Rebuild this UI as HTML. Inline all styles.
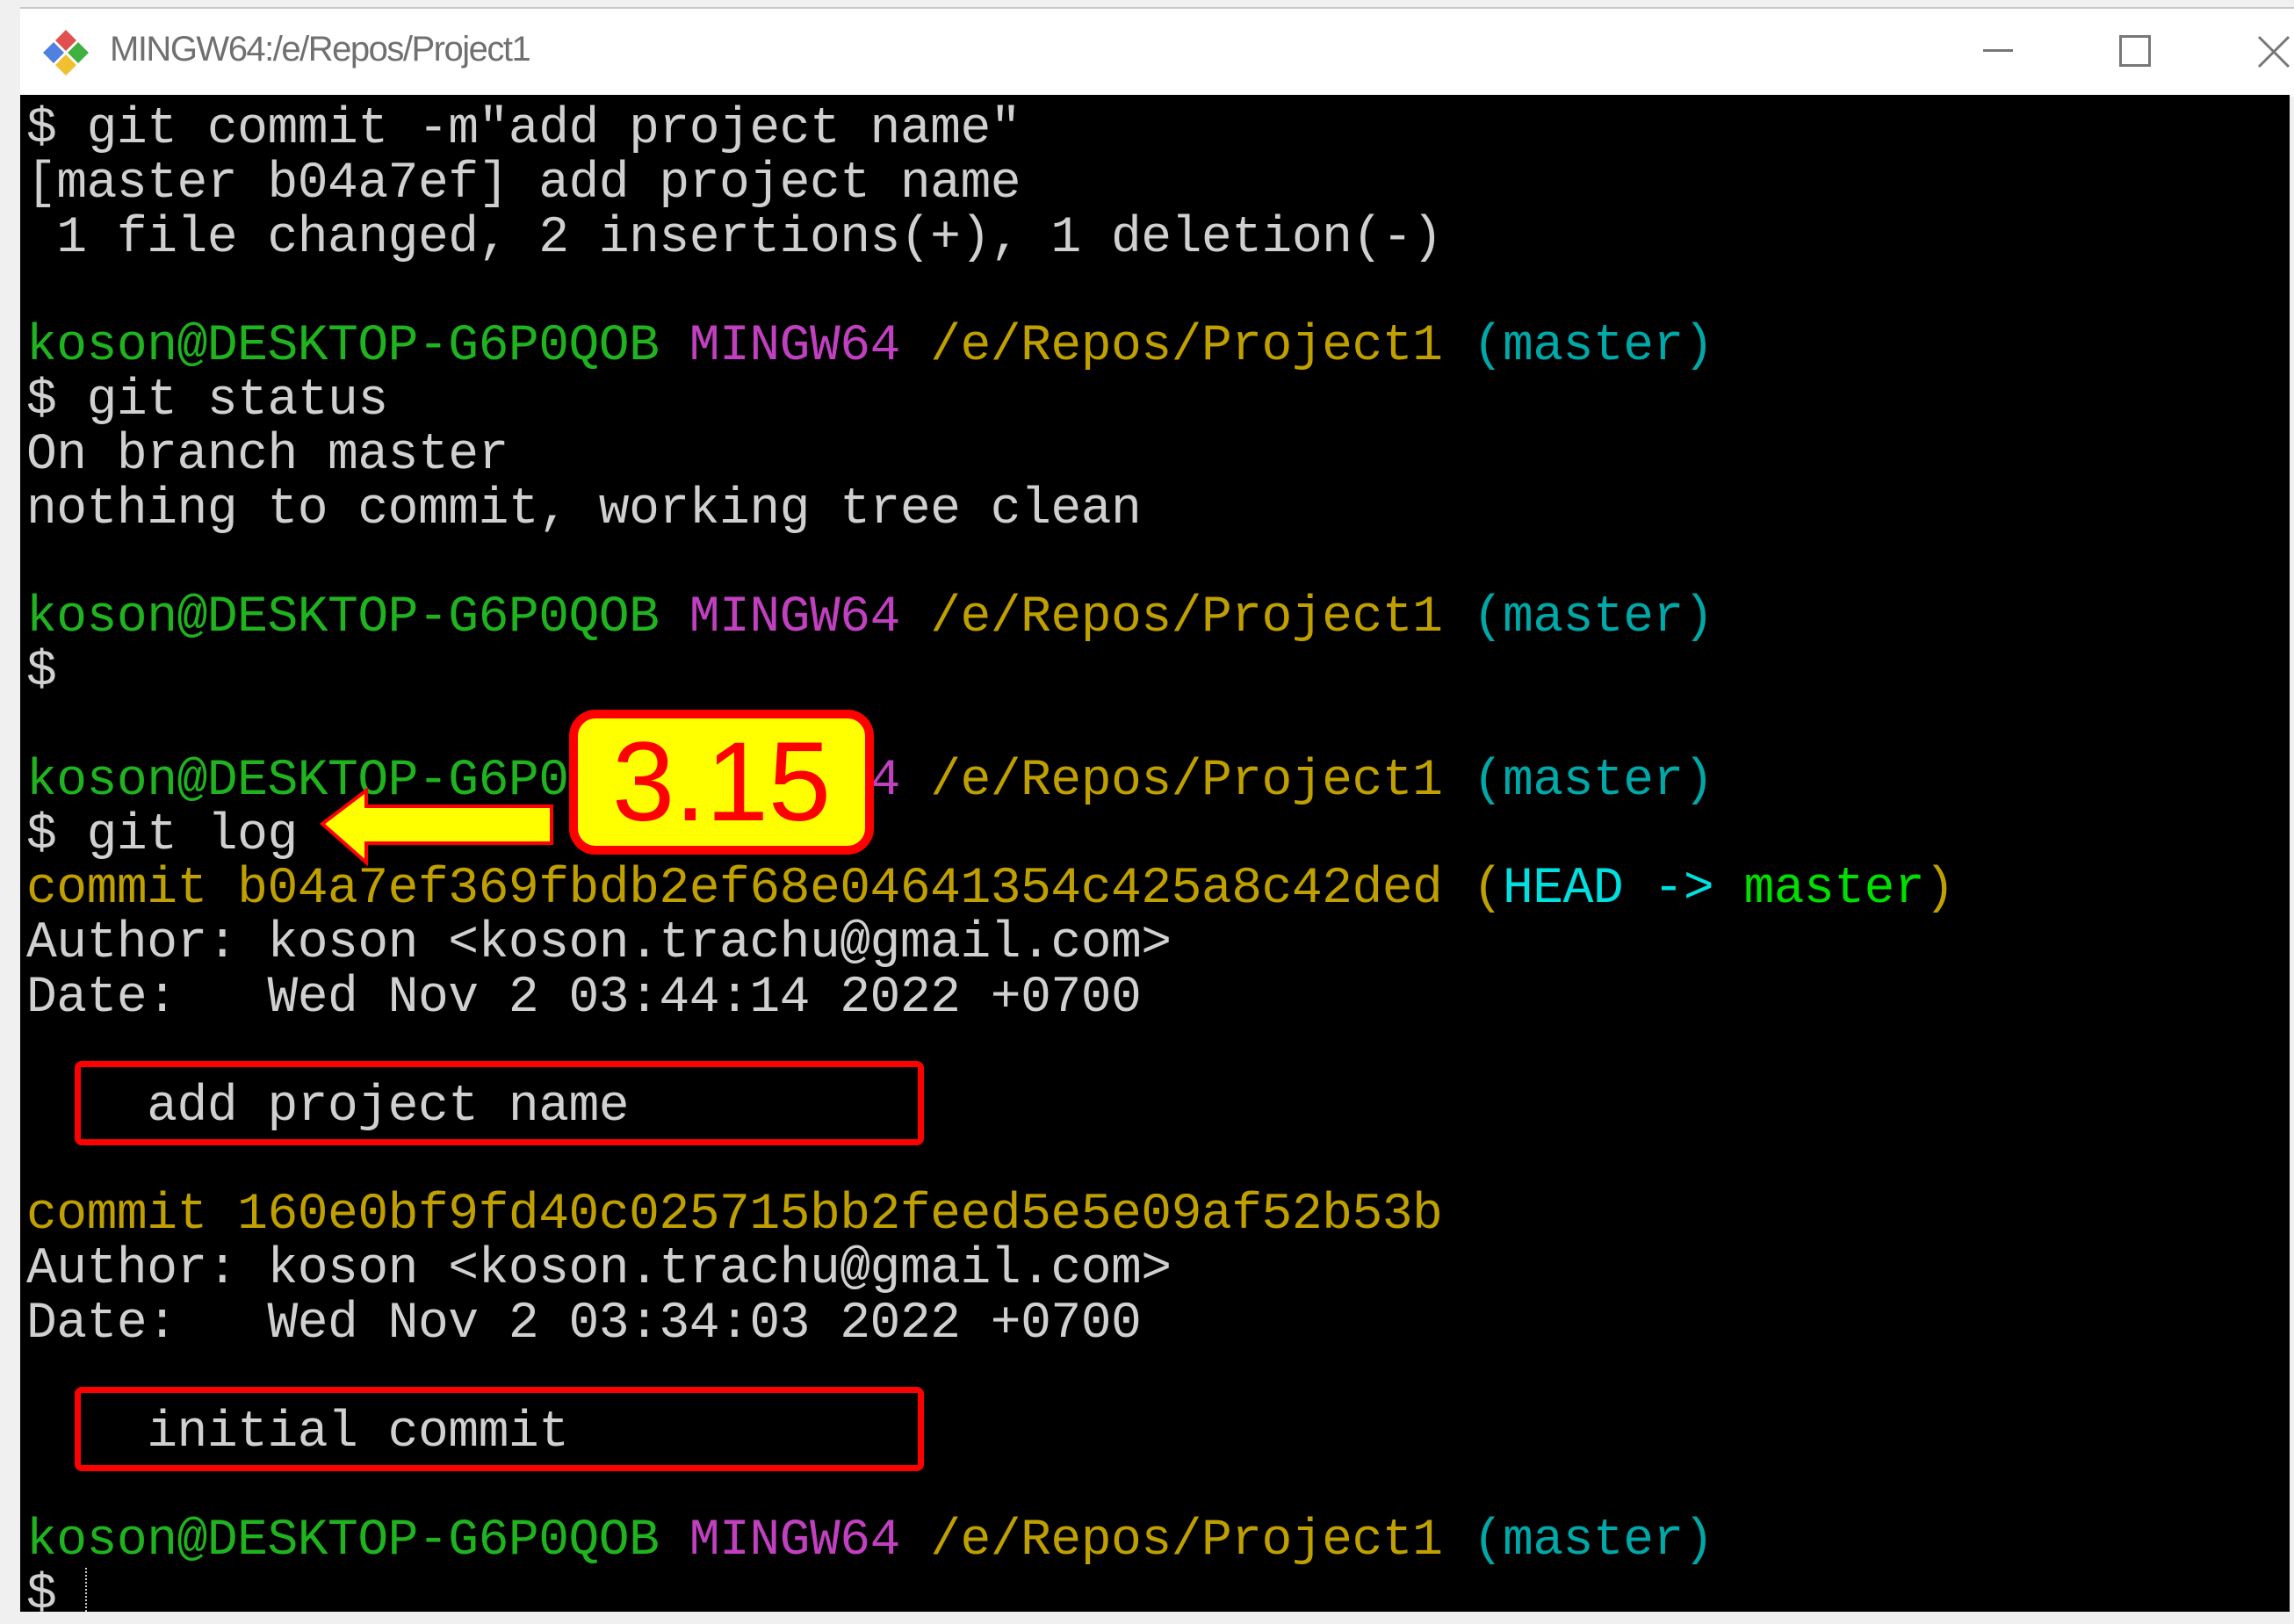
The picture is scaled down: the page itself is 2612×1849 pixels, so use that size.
<!DOCTYPE html>
<html><head><meta charset="utf-8"><style>
html,body{margin:0;padding:0;}
body{width:2612px;height:1835px;background:#f0f0f0;position:relative;overflow:hidden;}
#title{position:absolute;left:23px;top:8px;width:2589px;height:100px;background:#fff;border-top:2px solid #c8c8c8;}
#title .t{position:absolute;left:102px;top:24px;font:40px "Liberation Sans",sans-serif;color:#707070;letter-spacing:-1.5px;}
#term{position:absolute;left:23px;top:108px;width:2584px;height:1727px;background:#000;}
#lines{position:absolute;left:0;top:3px;width:2612px;height:1835px;}
.ln{position:absolute;left:30px;height:62px;line-height:62px;font:58px "Liberation Mono",monospace;letter-spacing:-0.5px;color:#d0d0d0;white-space:pre;}
.g{color:#1fb41f}.p{color:#c040c0}.y{color:#c0a000}.c{color:#00a8a8}.C{color:#00e0e0}.G{color:#00e000}
.box{position:absolute;border:7px solid #ff0000;border-radius:8px;box-sizing:border-box;}
</style></head><body>
<div id="title">
<svg style="position:absolute;left:24px;top:22px" width="56" height="56" viewBox="0 0 56 56">
<polygon points="28,2 40,14 28,26 16,14" fill="#e05050"/>
<polygon points="14,16 26,28 14,40 2,28" fill="#5080e0"/>
<polygon points="42,16 54,28 42,40 30,28" fill="#40b040"/>
<polygon points="28,30 40,42 28,54 16,42" fill="#f0c030"/>
</svg>
<div class="t">MINGW64:/e/Repos/Project1</div>
<div style="position:absolute;left:2235px;top:46px;width:34px;height:3px;background:#777"></div>
<div style="position:absolute;left:2390px;top:30px;width:30px;height:30px;border:3px solid #777"></div>
<svg style="position:absolute;left:2547px;top:30px" width="38" height="38"><path d="M2 2L36 36M36 2L2 36" stroke="#777" stroke-width="3"/></svg>
</div>
<div id="term"></div>
<div id="lines">
<div class="ln" style="top:112px">$ git commit -m"add project name"</div>
<div class="ln" style="top:174px">[master b04a7ef] add project name</div>
<div class="ln" style="top:236px"> 1 file changed, 2 insertions(+), 1 deletion(-)</div>
<div class="ln" style="top:359px"><span class="g">koson@DESKTOP-G6P0QOB</span> <span class="p">MINGW64</span> <span class="y">/e/Repos/Project1</span> <span class="c">(master)</span></div>
<div class="ln" style="top:421px">$ git status</div>
<div class="ln" style="top:483px">On branch master</div>
<div class="ln" style="top:545px">nothing to commit, working tree clean</div>
<div class="ln" style="top:668px"><span class="g">koson@DESKTOP-G6P0QOB</span> <span class="p">MINGW64</span> <span class="y">/e/Repos/Project1</span> <span class="c">(master)</span></div>
<div class="ln" style="top:730px">$</div>
<div class="ln" style="top:854px"><span class="g">koson@DESKTOP-G6P0QOB</span> <span class="p">MINGW64</span> <span class="y">/e/Repos/Project1</span> <span class="c">(master)</span></div>
<div class="ln" style="top:916px">$ git log</div>
<div class="ln" style="top:977px"><span class="y">commit b04a7ef369fbdb2ef68e04641354c425a8c42ded (</span><span class="C">HEAD -&gt; </span><span class="G">master</span><span class="y">)</span></div>
<div class="ln" style="top:1039px">Author: koson &lt;koson.trachu@gmail.com&gt;</div>
<div class="ln" style="top:1101px">Date:   Wed Nov 2 03:44:14 2022 +0700</div>
<div class="ln" style="top:1225px">    add project name</div>
<div class="ln" style="top:1348px"><span class="y">commit 160e0bf9fd40c025715bb2feed5e5e09af52b53b</span></div>
<div class="ln" style="top:1410px">Author: koson &lt;koson.trachu@gmail.com&gt;</div>
<div class="ln" style="top:1472px">Date:   Wed Nov 2 03:34:03 2022 +0700</div>
<div class="ln" style="top:1596px">    initial commit</div>
<div class="ln" style="top:1719px"><span class="g">koson@DESKTOP-G6P0QOB</span> <span class="p">MINGW64</span> <span class="y">/e/Repos/Project1</span> <span class="c">(master)</span></div>
<div class="ln" style="top:1781px">$</div>
</div>
<div style="position:absolute;left:97px;top:1785px;height:50px;border-left:2px dotted #ccc"></div>
<div class="box" style="left:85px;top:1208px;width:967px;height:96px"></div>
<div class="box" style="left:85px;top:1579px;width:967px;height:96px"></div>
<svg style="position:absolute;left:360px;top:895px" width="280" height="95" viewBox="360 895 280 95">
<polygon points="367,938 417,900 417,918 628,918 628,960 417,960 417,982" fill="#ffff00" stroke="#ff0000" stroke-width="4"/>
</svg>
<div style="position:absolute;left:648px;top:808px;width:347px;height:165px;background:#ffff00;border:10px solid #ff0000;border-radius:30px;box-sizing:border-box;text-align:center;font:128px 'Liberation Sans',sans-serif;color:#ff0000;line-height:145px">3.15</div>
</body></html>
